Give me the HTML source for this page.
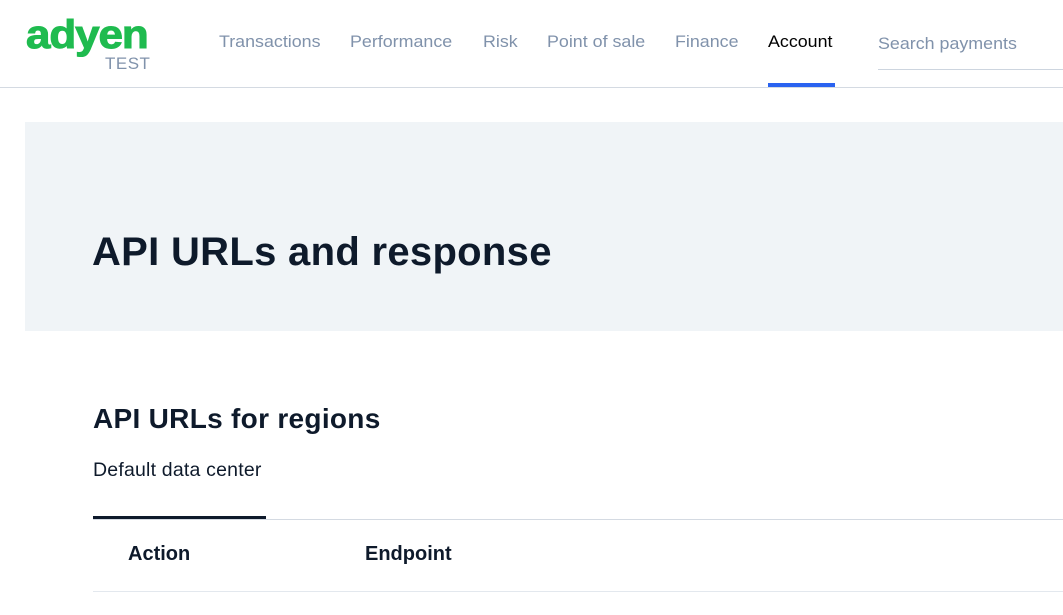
<!DOCTYPE html>
<html><head><style>
body{margin:0;width:1063px;height:615px;overflow:hidden;background:#fff;font-family:"Liberation Sans",sans-serif;position:relative}
.a{position:absolute;white-space:nowrap}
.nav{font-size:17px;color:#8092ab;top:32px;transform:scaleX(1.05);transform-origin:left}
</style></head><body>
<div class="a" style="left:26px;top:13px;font-size:40px;font-weight:bold;color:#1fbb4f;letter-spacing:-1px;transform:scaleX(1.1);transform-origin:left;-webkit-text-stroke:1px #1fbb4f">adyen</div>
<div class="a" style="left:105px;top:54px;font-size:17px;color:#8092ab;letter-spacing:0.5px">TEST</div>
<div class="a nav" style="left:219px">Transactions</div>
<div class="a nav" style="left:350px">Performance</div>
<div class="a nav" style="left:483px">Risk</div>
<div class="a nav" style="left:547px">Point of sale</div>
<div class="a nav" style="left:675px">Finance</div>
<div class="a nav" style="left:768px;color:#000">Account</div>
<div class="a nav" style="left:878px;top:34px">Search payments</div>
<div class="a" style="left:878px;top:69px;width:185px;height:1px;background:#cdd5df"></div>
<div class="a" style="left:0;top:87px;width:1063px;height:1px;background:#d4dae2"></div>
<div class="a" style="left:768px;top:83px;width:67px;height:4px;background:#2a63f0"></div>
<div class="a" style="left:25px;top:122px;width:1038px;height:209px;background:#f0f4f7"></div>
<div class="a" style="left:92px;top:230px;font-size:40px;font-weight:bold;color:#0e1a2b;letter-spacing:0.3px">API URLs and response</div>
<div class="a" style="left:93px;top:403px;font-size:28px;font-weight:bold;color:#0e1a2b;letter-spacing:0.3px">API URLs for regions</div>
<div class="a" style="left:93px;top:459px;font-size:19.5px;color:#0e1a2b;letter-spacing:0.2px">Default data center</div>
<div class="a" style="left:93px;top:519px;width:970px;height:1px;background:#d4dae2"></div>
<div class="a" style="left:93px;top:516px;width:173px;height:3px;background:#0e1a2b"></div>
<div class="a" style="left:128px;top:543px;font-size:20px;font-weight:bold;color:#0e1a2b">Action</div>
<div class="a" style="left:365px;top:543px;font-size:20px;font-weight:bold;color:#0e1a2b">Endpoint</div>
<div class="a" style="left:93px;top:591px;width:970px;height:1px;background:#e3e8ee"></div>
</body></html>
